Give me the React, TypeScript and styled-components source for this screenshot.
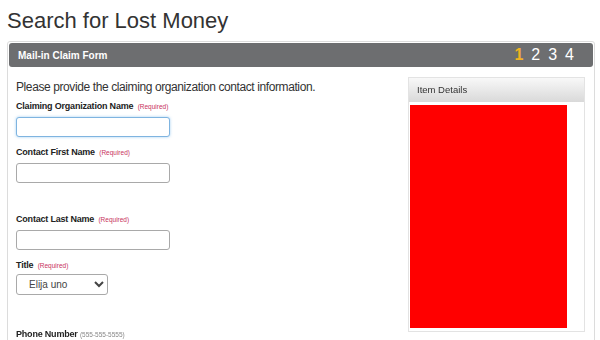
import React from "react";
import styled, { createGlobalStyle } from "styled-components";

const GlobalStyle = createGlobalStyle`
  html, body {
    margin: 0;
    padding: 0;
    background: #fff;
    font-family: "Liberation Sans", Arial, sans-serif;
    color: #333;
  }
`;

const steps = [1, 2, 3, 4];

const App: React.FC = () => {
  return (
    <Page>
      <GlobalStyle />
      <Title>Search for Lost Money</Title>
      <Panel>
        <PanelHeader>
          <HeaderTitle>Mail-in Claim Form</HeaderTitle>
          <Steps>
            {steps.map((s) => (
              <Step key={s} active={s === 1}>
                {s}
              </Step>
            ))}
          </Steps>
        </PanelHeader>
        <PanelBody>
          <FormColumn>
            <Intro>Please provide the claiming organization contact information.</Intro>
            <Field>
              <Label>
                Claiming Organization Name <Hint>(Required)</Hint>
              </Label>
              <TextInput type="text" focused defaultValue="" autoFocus />
            </Field>
            <Field spaceAfter={31}>
              <Label>
                Contact First Name <Hint>(Required)</Hint>
              </Label>
              <TextInput type="text" />
            </Field>
            <Field>
              <Label>
                Contact Last Name <Hint>(Required)</Hint>
              </Label>
              <TextInput type="text" />
            </Field>
            <Field spaceAfter={34}>
              <Label tight>
                Title <Hint>(Required)</Hint>
              </Label>
              <Select defaultValue="">
                <option value="">Elija uno</option>
                <option value="mr">Mr.</option>
                <option value="ms">Ms.</option>
              </Select>
            </Field>
            <Field>
              <Label>
                Phone Number <Note>(555-555-5555)</Note>
              </Label>
            </Field>
          </FormColumn>
          <SideColumn>
            <DetailsBox>
              <DetailsHeader>Item Details</DetailsHeader>
              <DetailsContent>
                <RedBlock />
              </DetailsContent>
            </DetailsBox>
          </SideColumn>
        </PanelBody>
      </Panel>
    </Page>
  );
};

const Page = styled.div`
  padding: 0 5px 0 7px;
  height: 340px;
  overflow: hidden;
`;

const Title = styled.h1`
  margin: 0;
  padding-top: 8px;
  height: 33px;
  font-size: 22px;
  font-weight: normal;
  line-height: 26px;
  color: #333;
`;

const Panel = styled.div`
  border: 1px solid #dcdcdc;
  border-radius: 3px;
  padding: 1px;
`;

const PanelHeader = styled.div`
  display: flex;
  align-items: center;
  justify-content: space-between;
  height: 24px;
  padding: 0 19px 0 9px;
  background: #6d6e70;
  border-radius: 3px;
`;

const HeaderTitle = styled.span`
  color: #fff;
  font-size: 10px;
  font-weight: bold;
`;

const Steps = styled.div`
  display: flex;
  gap: 8px;
`;

const Step = styled.span<{ active?: boolean }>`
  font-size: 16px;
  line-height: 20px;
  color: ${(p) => (p.active ? "#f0b323" : "#fff")};
  font-weight: ${(p) => (p.active ? "bold" : "normal")};
`;

const PanelBody = styled.div`
  display: flex;
  justify-content: space-between;
  padding: 10px 7px 0 7px;
`;

const FormColumn = styled.div`
  display: flex;
  flex-direction: column;
  width: 360px;
`;

const Intro = styled.p`
  margin: 3px 0 6px;
  font-size: 12px;
  letter-spacing: -0.4px;
  line-height: 15px;
  color: #333;
`;

const Field = styled.div<{ spaceAfter?: number }>`
  display: flex;
  flex-direction: column;
  align-items: flex-start;
  margin-bottom: ${(p) => p.spaceAfter ?? 10}px;
`;

const Label = styled.label<{ tight?: boolean }>`
  font-size: 9px;
  font-weight: bold;
  letter-spacing: -0.2px;
  color: #222;
  line-height: 10px;
  margin-bottom: ${(p) => (p.tight ? 3 : 5)}px;
`;

const Hint = styled.span`
  font-size: 6.5px;
  font-weight: normal;
  letter-spacing: 0;
  color: #c8325c;
  margin-left: 2px;
`;

const Note = styled.span`
  font-size: 6.5px;
  font-weight: normal;
  letter-spacing: 0;
  color: #888;
`;

const TextInput = styled.input<{ focused?: boolean }>`
  box-sizing: border-box;
  width: 154px;
  height: 20px;
  padding: 2px 6px;
  font-family: "Liberation Sans", Arial, sans-serif;
  font-size: 11px;
  border: 1px solid ${(p) => (p.focused ? "#7fb4e0" : "#a9a9a9")};
  border-radius: 3px;
  box-shadow: ${(p) => (p.focused ? "0 0 3px rgba(102,175,233,0.6)" : "none")};
  outline: none;
  background: #fff;
`;

const Select = styled.select`
  box-sizing: border-box;
  width: 92px;
  height: 21px;
  padding: 0 4px 0 8px;
  font-family: "Liberation Sans", Arial, sans-serif;
  font-size: 10px;
  color: #444;
  border: 1px solid #a9a9a9;
  border-radius: 3px;
  background: #fff;
`;

const SideColumn = styled.div`
  width: 177px;
  margin-right: 1px;
`;

const DetailsBox = styled.div`
  border: 1px solid #e3e3e3;
  height: 255px;
  box-sizing: border-box;
`;

const DetailsHeader = styled.div`
  height: 24px;
  line-height: 24px;
  padding-left: 8px;
  font-size: 9.5px;
  color: #333;
  background: linear-gradient(#f8f8f8, #d9d9d9);
`;

const DetailsContent = styled.div`
  padding: 3px 17px 0 1px;
`;

const RedBlock = styled.div`
  height: 223px;
  background: #ff0000;
`;

export default App;
